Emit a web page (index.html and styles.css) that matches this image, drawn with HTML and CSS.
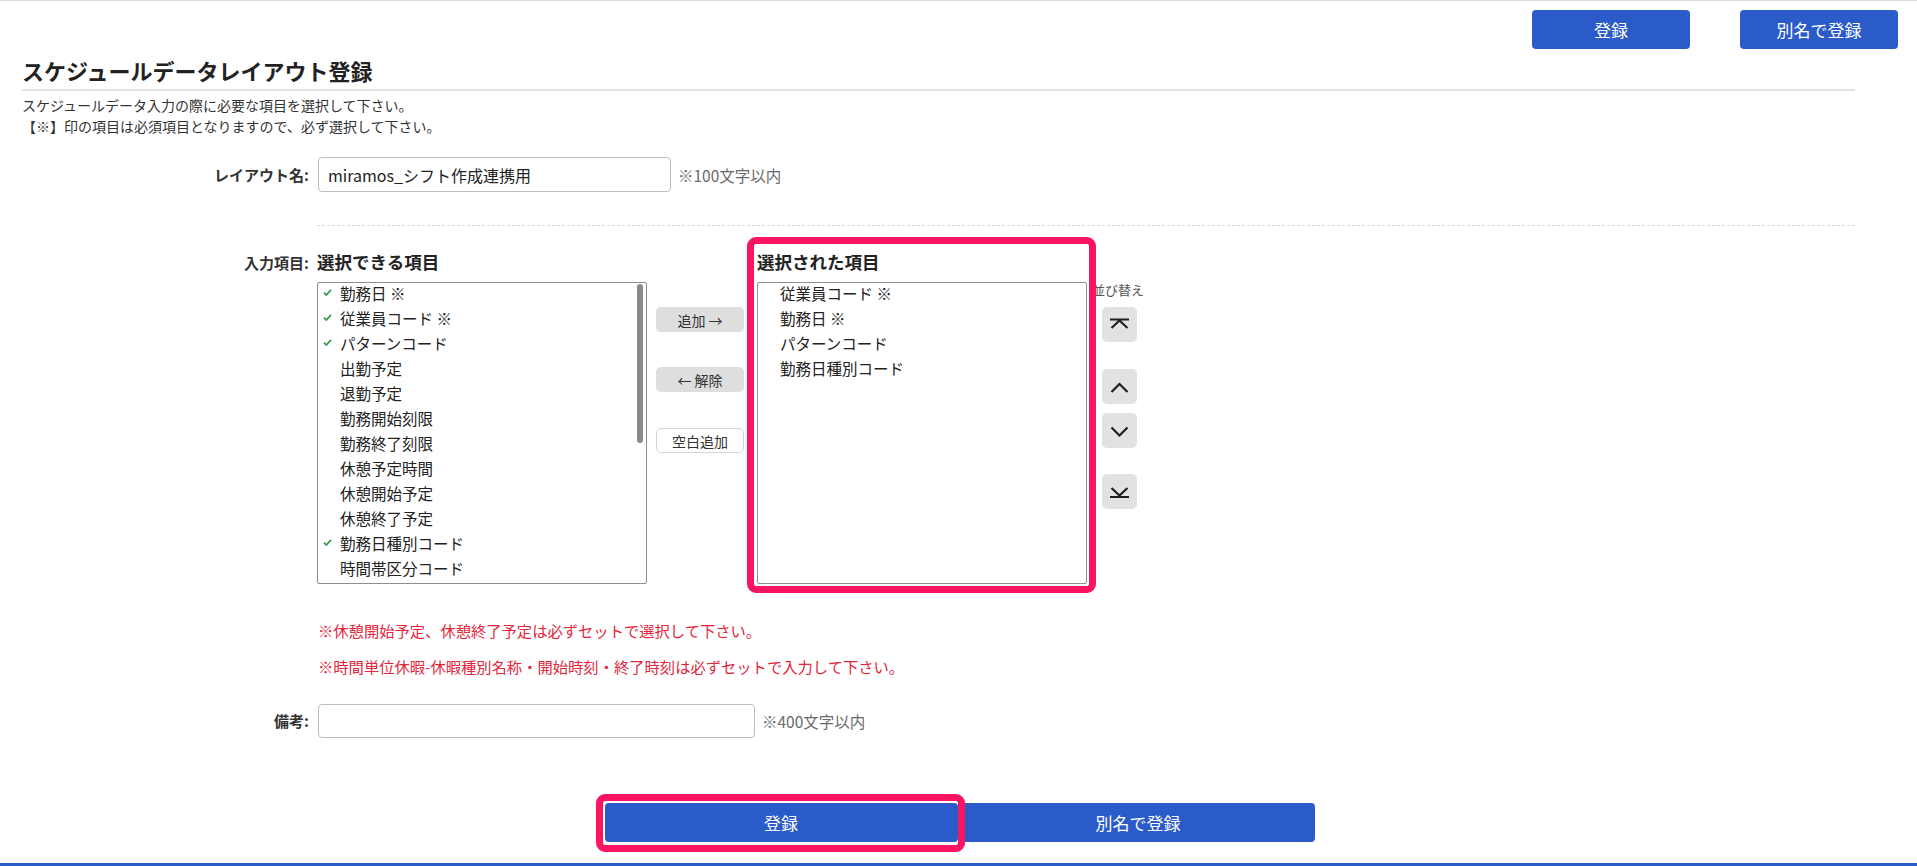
FILE: index.html
```html
<!DOCTYPE html>
<html lang="ja">
<head>
<meta charset="utf-8">
<title>スケジュールデータレイアウト登録</title>
<link rel="stylesheet" href="styles.css">
</head>
<body>
<div class="page">
  <div class="topbar">
    <button class="btn btn-primary btn-top">登録</button>
    <button class="btn btn-primary btn-top">別名で登録</button>
  </div>

  <div class="heading">
    <h1 class="title">スケジュールデータレイアウト登録</h1>
  </div>
  <div class="desc">
    <p>スケジュールデータ入力の際に必要な項目を選択して下さい。</p>
    <p>【※】印の項目は必須項目となりますので、必ず選択して下さい。</p>
  </div>

  <div class="form">
    <div class="row row-name">
      <div class="label">レイアウト名:</div>
      <div class="field">
        <input class="text-input input-name" type="text" value="miramos_シフト作成連携用">
        <span class="hint">※100文字以内</span>
      </div>
    </div>

    <div class="divider"></div>

    <div class="row row-io">
      <div class="label label-io">入力項目:</div>
      <div class="io">
        <div class="col-list">
          <div class="list-title">選択できる項目</div>
          <div class="list-wrap">
            <ul class="list">
              <li class="item"><span class="check"><svg width="9" height="7" viewBox="0 0 9 7"><path d="M1 3.6 L3.3 6 L8 0.8" fill="none" stroke="#3c9c50" stroke-width="1.8"/></svg></span>勤務日 ※</li>
              <li class="item"><span class="check"><svg width="9" height="7" viewBox="0 0 9 7"><path d="M1 3.6 L3.3 6 L8 0.8" fill="none" stroke="#3c9c50" stroke-width="1.8"/></svg></span>従業員コード ※</li>
              <li class="item"><span class="check"><svg width="9" height="7" viewBox="0 0 9 7"><path d="M1 3.6 L3.3 6 L8 0.8" fill="none" stroke="#3c9c50" stroke-width="1.8"/></svg></span>パターンコード</li>
              <li class="item"><span class="check"></span>出勤予定</li>
              <li class="item"><span class="check"></span>退勤予定</li>
              <li class="item"><span class="check"></span>勤務開始刻限</li>
              <li class="item"><span class="check"></span>勤務終了刻限</li>
              <li class="item"><span class="check"></span>休憩予定時間</li>
              <li class="item"><span class="check"></span>休憩開始予定</li>
              <li class="item"><span class="check"></span>休憩終了予定</li>
              <li class="item"><span class="check"><svg width="9" height="7" viewBox="0 0 9 7"><path d="M1 3.6 L3.3 6 L8 0.8" fill="none" stroke="#3c9c50" stroke-width="1.8"/></svg></span>勤務日種別コード</li>
              <li class="item"><span class="check"></span>時間帯区分コード</li>
            </ul>
            <div class="scroll-thumb"></div>
          </div>
        </div>

        <div class="col-move">
          <button class="btn btn-small btn-gray">追加 →</button>
          <button class="btn btn-small btn-gray btn-remove">← 解除</button>
          <button class="btn btn-small btn-outline btn-blank">空白追加</button>
        </div>

        <div class="col-list col-selected">
          <div class="list-title">選択された項目</div>
          <ul class="list">
            <li class="item"><span class="check"></span>従業員コード ※</li>
            <li class="item"><span class="check"></span>勤務日 ※</li>
            <li class="item"><span class="check"></span>パターンコード</li>
            <li class="item"><span class="check"></span>勤務日種別コード</li>
          </ul>
          <div class="highlight highlight-list"></div>
        </div>

        <div class="col-sort">
          <div class="sort-label">並び替え</div>
          <button class="btn sort-btn" aria-label="先頭へ"><svg width="35" height="35" viewBox="0 0 35 35"><path d="M8 12.5 H27 M9.5 21 L17.5 13.5 L25.5 21" fill="none" stroke="#1f1f1f" stroke-width="2.2"/></svg></button>
          <button class="btn sort-btn sort-up" aria-label="上へ"><svg width="35" height="35" viewBox="0 0 35 35"><path d="M9.5 23 L17.5 15 L25.5 23" fill="none" stroke="#1f1f1f" stroke-width="2.2"/></svg></button>
          <button class="btn sort-btn sort-down" aria-label="下へ"><svg width="35" height="35" viewBox="0 0 35 35"><path d="M9.5 14.5 L17.5 22.5 L25.5 14.5" fill="none" stroke="#1f1f1f" stroke-width="2.2"/></svg></button>
          <button class="btn sort-btn sort-bottom" aria-label="末尾へ"><svg width="35" height="35" viewBox="0 0 35 35"><path d="M9.5 14 L17.5 21.5 L25.5 14 M8 23 H27" fill="none" stroke="#1f1f1f" stroke-width="2.2"/></svg></button>
        </div>
      </div>
    </div>

    <div class="notes">
      <p>※休憩開始予定、休憩終了予定は必ずセットで選択して下さい。</p>
      <p>※時間単位休暇-休暇種別名称・開始時刻・終了時刻は必ずセットで入力して下さい。</p>
    </div>

    <div class="row row-memo">
      <div class="label">備考:</div>
      <div class="field">
        <input class="text-input input-memo" type="text" value="">
        <span class="hint">※400文字以内</span>
      </div>
    </div>
  </div>

  <div class="actions">
    <div class="action-wrap">
      <button class="btn btn-primary btn-bottom">登録</button>
      <div class="highlight highlight-btn"></div>
    </div>
    <button class="btn btn-primary btn-bottom">別名で登録</button>
  </div>

  <div class="footer-line"></div>
</div>
</body>
</html>
```

FILE: styles.css
```css
html, body {
  margin: 0;
  padding: 0;
  background: #ffffff;
  overflow: hidden;
}

body {
  font-family: "Noto Sans CJK JP", "Noto Sans", "Liberation Sans", sans-serif;
  color: #222222;
}

p {
  margin: 0;
}

.page {
  border-top: 1px solid #dcdcdc;
  width: 1917px;
  height: 865px;
  display: flex;
  flex-direction: column;
}

/* buttons */
.btn {
  border: none;
  margin: 0;
  padding: 0;
  font-family: inherit;
  cursor: pointer;
  display: flex;
  align-items: center;
  justify-content: center;
}

.btn-primary {
  background: #2a5bc8;
  color: #ffffff;
  border-radius: 4px;
  font-size: 17px;
  line-height: 20px;
}

.topbar {
  display: flex;
  justify-content: flex-end;
  gap: 50px;
  padding: 9px 19px 0 0;
}

.btn-top {
  width: 158px;
  height: 39px;
}

/* heading */
.heading {
  margin: 7px 62px 0 22px;
  padding-bottom: 5px;
  border-bottom: 2px solid #e2e2e2;
}

.title {
  margin: 0;
  font-size: 22px;
  line-height: 28px;
  font-weight: 700;
  color: #222222;
}

.desc {
  margin: 4px 0 0 22px;
  font-size: 14px;
  line-height: 21px;
  color: #333333;
}

/* form */
.form {
  margin: 20px 62px 0 22px;
  display: flex;
  flex-direction: column;
}

.row {
  display: flex;
  gap: 8px;
}

.label {
  width: 287px;
  flex: none;
  text-align: right;
  font-size: 15px;
  font-weight: 700;
  color: #333333;
  line-height: 20px;
}

.row-name,
.row-memo {
  align-items: center;
}

.field {
  display: flex;
  align-items: center;
  gap: 7px;
}

.text-input {
  box-sizing: border-box;
  border: 1px solid #bdbdbd;
  border-radius: 4px;
  padding: 0 9px;
  font-family: inherit;
  font-size: 16px;
  color: #222222;
  margin: 0 0 0 1px;
  outline: none;
}

.input-name {
  width: 353px;
  height: 35px;
}

.input-memo {
  width: 437px;
  height: 34px;
}

.hint {
  font-size: 15.5px;
  color: #6a6a6a;
}

.divider {
  margin: 33px 0 0 295px;
  border-top: 1px dashed #d9d9d9;
}

/* input items */
.row-io {
  margin-top: 24px;
  align-items: flex-start;
}

.label-io {
  line-height: 26px;
}

.io {
  display: flex;
  align-items: flex-start;
}

.col-list {
  width: 330px;
  display: flex;
  flex-direction: column;
}

.col-selected {
  position: relative;
  margin-left: 13px;
}

.list-title {
  font-size: 17.5px;
  font-weight: 700;
  line-height: 24px;
  color: #222222;
  margin-bottom: 8px;
}

.list-wrap {
  position: relative;
}

.list {
  list-style: none;
  margin: 0;
  padding: 0;
  box-sizing: border-box;
  height: 302px;
  border: 1px solid #8f8f8f;
  border-radius: 2px;
  overflow: hidden;
}

.scroll-thumb {
  position: absolute;
  top: 2px;
  right: 4px;
  width: 6px;
  height: 159px;
  background: #8a8a8a;
  border-radius: 3px;
}

.item {
  box-sizing: border-box;
  display: flex;
  align-items: center;
  height: 25px;
  padding: 0 0 4px 5px;
  font-size: 15.5px;
  line-height: 21px;
  color: #222222;
  white-space: nowrap;
}

.check {
  width: 17px;
  flex: none;
  align-self: flex-start;
  margin-top: 6px;
  height: 8px;
  display: flex;
}

.col-move {
  width: 88px;
  margin-left: 9px;
  padding-top: 57px;
  display: flex;
  flex-direction: column;
}

.btn-small {
  width: 88px;
  height: 25px;
  border-radius: 5px;
  font-size: 14px;
  line-height: 18px;
  color: #333333;
}

.btn-gray {
  background: #dedede;
}

.btn-remove {
  margin-top: 35px;
}

.btn-outline {
  box-sizing: border-box;
  background: #ffffff;
  border: 1px solid #d4d4d4;
}

.btn-blank {
  margin-top: 36px;
}

.col-sort {
  margin-left: 5px;
  padding-top: 32px;
  display: flex;
  flex-direction: column;
  align-items: flex-start;
}

.sort-label {
  font-size: 13px;
  line-height: 16px;
  color: #555555;
  white-space: nowrap;
}

.sort-btn {
  width: 35px;
  height: 35px;
  margin: 9px 0 0 10px;
  background: #e2e2e2;
  border-radius: 5px;
}

.sort-up {
  margin-top: 27px;
}

.sort-down {
  margin-top: 9px;
}

.sort-bottom {
  margin-top: 26px;
}

/* notes */
.notes {
  margin: 35px 0 0 296px;
  font-size: 15.3px;
  line-height: 22px;
  color: #e2263c;
  display: flex;
  flex-direction: column;
  gap: 14px;
}

.row-memo {
  margin-top: 27px;
}

/* bottom actions */
.actions {
  margin-top: 65px;
  display: flex;
  justify-content: center;
  gap: 4px;
  padding-left: 2px;
}

.action-wrap {
  position: relative;
}

.btn-bottom {
  width: 353px;
  height: 39px;
}

.footer-line {
  margin-top: 21px;
  height: 3px;
  background: #2a5bc8;
}

/* annotation highlights */
.highlight {
  position: absolute;
  box-sizing: border-box;
  border: 7px solid #fb1461;
  border-radius: 9px;
  pointer-events: none;
}

.highlight-list {
  left: -10px;
  top: -13px;
  width: 349px;
  height: 356px;
}

.highlight-btn {
  left: -9px;
  top: -9px;
  width: 369px;
  height: 58px;
}
```
